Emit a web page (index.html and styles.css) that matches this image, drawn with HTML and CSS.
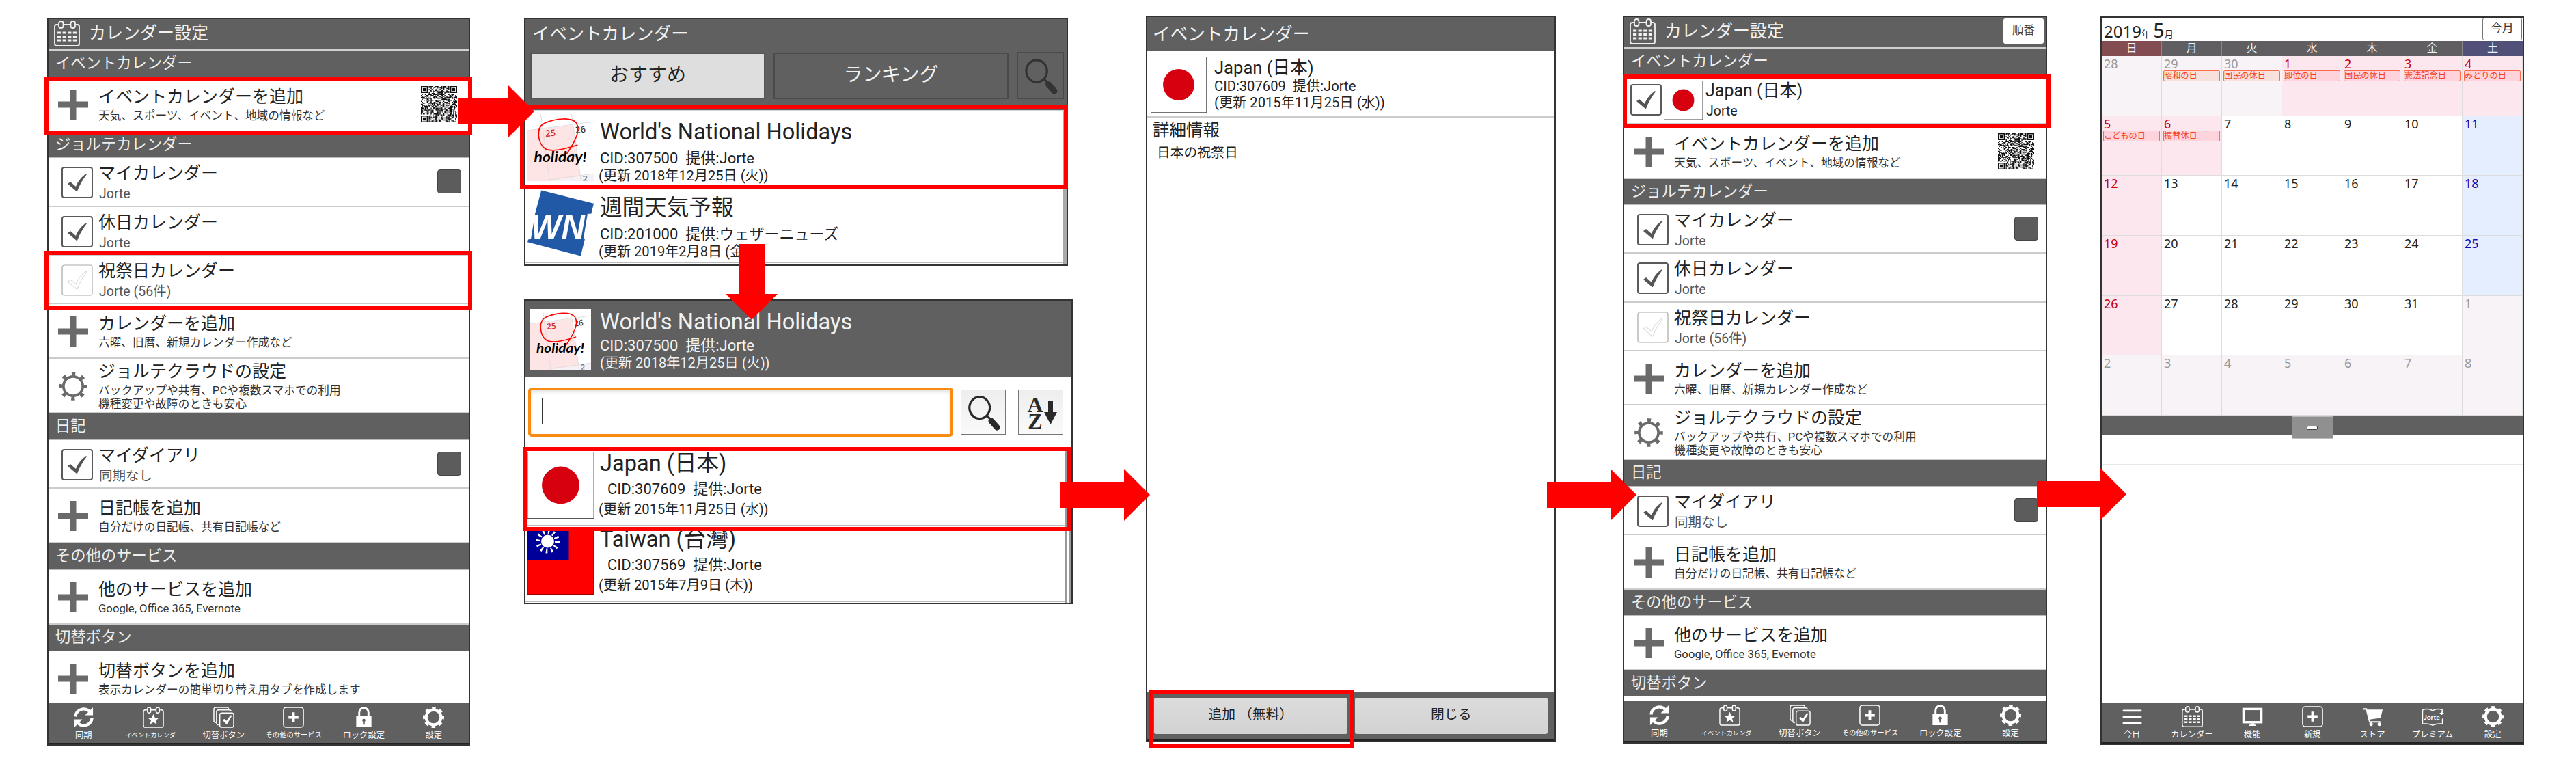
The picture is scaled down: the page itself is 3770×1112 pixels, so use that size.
FILE: index.html
```html
<!DOCTYPE html>
<html lang="ja">
<head>
  <meta charset="UTF-8" />
  <meta name="viewport" content="width=device-width, initial-scale=1.0" />
  <title>イベントカレンダーの追加手順</title>
  <link rel="stylesheet" href="styles.css">
</head>
<body>
  <!-- icons -->
  <svg class="sprite" xmlns="http://www.w3.org/2000/svg">
    <symbol id="i-cal" viewBox="0 0 38 38">
      <g fill="none" stroke="currentColor" stroke-width="1.8">
        <path d="M6 6H4q-3 0-3 3v25q0 3 3 3h30q3 0 3-3V9q0-3-3-3h-2M14 6h10" />
        <rect x="7" y="1" width="6.5" height="10" rx="3" />
        <rect x="24.5" y="1" width="6.5" height="10" rx="3" />
      </g>
      <path d="M5 18h28M5 23.5h28M5 29h28" stroke="currentColor" stroke-width="3" stroke-dasharray="5.2 2.4" />
    </symbol>
    <symbol id="i-plus" viewBox="0 0 44 44">
      <path d="M22 0v44M0 22h44" stroke="currentColor" stroke-width="9" />
    </symbol>
    <symbol id="i-gear" viewBox="0 0 40 40">
      <g fill="none" stroke="currentColor">
        <circle cx="20" cy="20" r="13.5" stroke-width="3.6" />
        <circle cx="20" cy="20" r="17.3" stroke-width="5" stroke-dasharray="5 8.588" stroke-dashoffset="2.5" />
      </g>
    </symbol>
    <symbol id="i-gear2" viewBox="0 0 40 40">
      <g fill="none" stroke="currentColor">
        <circle cx="20" cy="20" r="14" stroke-width="5.5" />
        <circle cx="20" cy="20" r="17.5" stroke-width="5" stroke-dasharray="7 6.744" stroke-dashoffset="3.5" />
      </g>
    </symbol>
    <symbol id="i-check" viewBox="0 0 46 46">
      <rect x="1" y="1" width="44" height="44" rx="3" fill="#fff" stroke="#5a5a5a" stroke-width="2" />
      <path d="M9 25l4-3 8 7C24 21 29 15 36 10l1 1C31 19 26 27 23 36h-1z" fill="#555" />
    </symbol>
    <symbol id="i-uncheck" viewBox="0 0 46 46">
      <rect x="1" y="1" width="44" height="44" rx="3" fill="#fff" stroke="#aaa" stroke-width="1.2" />
      <path d="M9 25l4-3 8 7C24 21 29 15 36 10l1 1C31 19 26 27 23 36h-1z" fill="none" stroke="#ddd" stroke-width="1.2" />
    </symbol>
    <symbol id="i-sync" viewBox="0 0 32 32">
      <path d="M3.5 15a12.5 12.5 0 0 1 21-8" fill="none" stroke="currentColor" stroke-width="4.4" />
      <path d="M30 1v12H18z" fill="currentColor" />
      <g transform="rotate(180 16 16)">
        <path d="M3.5 15a12.5 12.5 0 0 1 21-8" fill="none" stroke="currentColor" stroke-width="4.4" />
        <path d="M30 1v12H18z" fill="currentColor" />
      </g>
    </symbol>
    <symbol id="i-star" viewBox="0 0 32 32">
      <g fill="none" stroke="currentColor" stroke-width="1.5">
        <path d="M6 5H4Q1 5 1 8v20q0 3 3 3h24q3 0 3-3V8q0-3-3-3h-2M12 5h8" />
        <rect x="7" y="1" width="5" height="8.5" rx="2.5" />
        <rect x="20" y="1" width="5" height="8.5" rx="2.5" />
      </g>
      <path d="M16 11l2.3 5.6 6 .4-4.7 3.8 1.6 5.9-5.2-3.3-5.2 3.3 1.6-5.9L7.700 17l6-.4z" fill="currentColor" />
    </symbol>
    <symbol id="i-switch" viewBox="0 0 32 32">
      <g fill="none" stroke="currentColor" stroke-width="1.5">
        <path d="M4 24Q1 24 1 21V4q0-3 3-3h16q3 0 3 2" />
        <path d="M8 27.5q-3 0-3-3V8q0-3 3-3h16q3 0 3 2" />
        <rect x="10" y="9.5" width="21" height="21.5" rx="3" />
      </g>
      <path d="M14 20l3-1.5 3 3 6-8.500 2.500.5L20.500 27z" fill="currentColor" />
    </symbol>
    <symbol id="i-new" viewBox="0 0 32 32">
      <rect x="1" y="1" width="30" height="30" rx="4" fill="none" stroke="currentColor" stroke-width="1.6" />
      <path d="M16 8.5v15M8.500 16h15" stroke="currentColor" stroke-width="4" />
    </symbol>
    <symbol id="i-lock" viewBox="0 0 32 32">
      <path d="M9 15V9a7 7.5 0 0 1 14 0v6" fill="none" stroke="currentColor" stroke-width="3" />
      <path fill-rule="evenodd" d="M4.5 14h23v17h-23zM16 18a2.500 2.500 0 0 0-1.300 4.600V27h2.600v-4.400A2.500 2.500 0 0 0 16 18z" fill="currentColor" />
    </symbol>
    <symbol id="i-menu" viewBox="0 0 32 32">
      <path d="M3 7h26M3 16.5h26M3 26h26" stroke="currentColor" stroke-width="2.8" stroke-linecap="round" />
    </symbol>
    <symbol id="i-screen" viewBox="0 0 32 32">
      <rect x="2.5" y="4.5" width="27" height="20" fill="none" stroke="currentColor" stroke-width="3.5" />
      <path d="M13 26h6v2h2.5v2h-11v-2H13z" fill="currentColor" />
    </symbol>
    <symbol id="i-cart" viewBox="0 0 32 32">
      <path d="M1 4.5h5.500l5 19.500h16" fill="none" stroke="currentColor" stroke-width="2.2" />
      <path d="M8 5.5h23l-3 12.500-17 2.500z" fill="currentColor" />
      <circle cx="13.5" cy="27.5" r="2.6" fill="currentColor" />
      <circle cx="26" cy="27.5" r="2.6" fill="currentColor" />
    </symbol>
    <symbol id="i-premium" viewBox="0 0 34 32">
      <path d="M2 6q8-3 15 1 7-4 15-1v4M32 19v8q-8-1-15 2-7-3-15-2V6M28 11h6M31 8.500v5" fill="none" stroke="currentColor" stroke-width="1.5" />
      <text x="4" y="21" class="jorte" textLength="24" lengthAdjust="spacingAndGlyphs">Jorte</text>
    </symbol>
    <symbol id="i-search" viewBox="0 0 60 60">
      <ellipse cx="25" cy="24" rx="14" ry="15" fill="none" stroke="currentColor" stroke-width="3" />
      <path d="M35 35l6 6" stroke="currentColor" stroke-width="3" />
      <path d="M41 42l8 9" stroke="currentColor" stroke-width="8" stroke-linecap="round" />
    </symbol>
    <symbol id="i-japan" viewBox="0 0 100 100">
      <rect x=".5" y=".5" width="99" height="99" fill="#fff" stroke="#555" />
      <circle cx="50" cy="50" r="28" fill="#d7000f" />
    </symbol>
    <symbol id="i-holiday" viewBox="0 0 98 98">
      <rect width="98" height="98" fill="#fff" />
      <path d="M0 24L67 16 78 91 34 98H0z" fill="#fde5e5" />
      <path d="M34 98l44-7 20-3v10z" fill="#f5f0f6" />
      <path d="M0 24L98 11M20 0l13 98M65 0l14 98M33 96l65-9" fill="none" stroke="#ddd" stroke-width="1" />
      <text x="27" y="33" class="num red" transform="rotate(-5 27 33)">25</text>
      <text x="71" y="28" class="num" transform="rotate(-5 71 28)">26</text>
      <text x="81" y="99" class="num pale">2</text>
      <path d="M74 45C58 50 38 56 27 51 15 43 12 19 26 13 42 6 65 4 72 13 80 25 66 46 58 58" fill="none" stroke="#f00" stroke-width="1.7" />
      <text x="10" y="70" class="holiday" textLength="77" lengthAdjust="spacingAndGlyphs">holiday!</text>
    </symbol>
    <symbol id="i-wn" viewBox="0 0 98 96">
      <path d="M21 0L97 19 78 95 1 75z" fill="#2259a6" />
      <path d="M0 34h12L6 70 0 72zM88 34h10v36H82z" fill="#fff" />
      <text x="6" y="70" class="wn" textLength="78" lengthAdjust="spacingAndGlyphs">WN</text>
    </symbol>
    <symbol id="i-taiwan" viewBox="0 0 98 98">
      <rect x=".5" y=".5" width="97" height="97" fill="#f00" stroke="#900" />
      <rect x="0" y="0" width="61" height="47" fill="#009" />
      <circle cx="30" cy="20" r="14" fill="none" stroke="#fff" stroke-width="7" stroke-dasharray="2.4 4.93" />
      <circle cx="30" cy="20" r="9.5" fill="#fff" />
    </symbol>
  </svg>

  <div class="board">

    <!-- step 1: calendar settings -->
    <section class="phone settings step1">
      <header class="bar"><svg class="bar-icon"><use href="#i-cal" /></svg>カレンダー設定</header>
      <div class="list">
        <h2>イベントカレンダー</h2>
        <div class="item">
          <svg class="plus"><use href="#i-plus" /></svg>
          <div class="txt"><b>イベントカレンダーを追加</b><small>天気、スポーツ、イベント、地域の情報など</small></div>
          <svg class="qr" viewBox="0 0 37 37"></svg>
        </div>
        <h2>ジョルテカレンダー</h2>
        <div class="item check">
          <svg class="box"><use href="#i-check" /></svg>
          <div class="txt"><b>マイカレンダー</b><small>Jorte</small></div>
          <span class="color"></span>
        </div>
        <div class="item check">
          <svg class="box"><use href="#i-check" /></svg>
          <div class="txt"><b>休日カレンダー</b><small>Jorte</small></div>
        </div>
        <div class="item check">
          <svg class="box"><use href="#i-uncheck" /></svg>
          <div class="txt"><b>祝祭日カレンダー</b><small>Jorte (56件)</small></div>
        </div>
        <div class="item">
          <svg class="plus"><use href="#i-plus" /></svg>
          <div class="txt"><b>カレンダーを追加</b><small>六曜、旧暦、新規カレンダー作成など</small></div>
        </div>
        <div class="item cloud">
          <svg class="plus"><use href="#i-gear" /></svg>
          <div class="txt"><b>ジョルテクラウドの設定</b><small>バックアップや共有、PCや複数スマホでの利用<br>機種変更や故障のときも安心</small></div>
        </div>
        <h2>日記</h2>
        <div class="item check">
          <svg class="box"><use href="#i-check" /></svg>
          <div class="txt"><b>マイダイアリ</b><small>同期なし</small></div>
          <span class="color"></span>
        </div>
        <div class="item">
          <svg class="plus"><use href="#i-plus" /></svg>
          <div class="txt"><b>日記帳を追加</b><small>自分だけの日記帳、共有日記帳など</small></div>
        </div>
        <h2>その他のサービス</h2>
        <div class="item">
          <svg class="plus"><use href="#i-plus" /></svg>
          <div class="txt"><b>他のサービスを追加</b><small>Google, Office 365, Evernote</small></div>
        </div>
        <h2>切替ボタン</h2>
        <div class="item">
          <svg class="plus"><use href="#i-plus" /></svg>
          <div class="txt"><b>切替ボタンを追加</b><small>表示カレンダーの簡単切り替え用タブを作成します</small></div>
        </div>
      </div>
      <footer class="tabs">
        <div><svg><use href="#i-sync" /></svg>同期</div>
        <div class="s9"><svg><use href="#i-star" /></svg>イベントカレンダー</div>
        <div><svg><use href="#i-switch" /></svg>切替ボタン</div>
        <div class="s10"><svg><use href="#i-new" /></svg>その他のサービス</div>
        <div><svg><use href="#i-lock" /></svg>ロック設定</div>
        <div><svg><use href="#i-gear2" /></svg>設定</div>
      </footer>
    </section>

    <!-- steps 2 and 3: event calendar search -->
    <div class="column">
      <section class="phone store step2">
        <div class="store-head">
          <div class="store-title">イベントカレンダー</div>
          <div class="store-tabs">
            <span class="tab on">おすすめ</span>
            <span class="tab">ランキング</span>
            <span class="find"><svg><use href="#i-search" /></svg></span>
          </div>
        </div>
        <div class="feed">
          <div class="entry">
            <svg class="thumb"><use href="#i-holiday" /></svg>
            <div class="info"><b>World's National Holidays</b><p>CID:307500&nbsp; 提供:Jorte</p><small>(更新 2018年12月25日 (火))</small></div>
          </div>
          <div class="entry">
            <svg class="thumb"><use href="#i-wn" /></svg>
            <div class="info"><b>週間天気予報</b><p>CID:201000&nbsp; 提供:ウェザーニューズ</p><small>(更新 2019年2月8日 (金))</small></div>
          </div>
        </div>
      </section>

      <section class="phone store step3">
        <div class="cal-head">
          <svg class="thumb"><use href="#i-holiday" /></svg>
          <div class="info"><b>World's National Holidays</b><p>CID:307500&nbsp; 提供:Jorte</p><small>(更新 2018年12月25日 (火))</small></div>
        </div>
        <div class="search-row">
          <div class="input"><i></i></div>
          <span class="btn"><svg><use href="#i-search" /></svg></span>
          <span class="btn">
            <svg viewBox="0 0 64 64">
              <text x="24" y="32" class="az">A</text>
              <text x="24" y="56" class="az">Z</text>
              <path d="M43 16h7v16h6L46.500 50 37 32h6z" fill="#2a2a2a" />
            </svg>
          </span>
        </div>
        <div class="feed">
          <div class="entry">
            <svg class="thumb"><use href="#i-japan" /></svg>
            <div class="info"><b>Japan (日本)</b><p>CID:307609&nbsp; 提供:Jorte</p><small>(更新 2015年11月25日 (水))</small></div>
          </div>
          <div class="entry">
            <svg class="thumb"><use href="#i-taiwan" /></svg>
            <div class="info"><b>Taiwan (台灣)</b><p>CID:307569&nbsp; 提供:Jorte</p><small>(更新 2015年7月9日 (木))</small></div>
          </div>
        </div>
      </section>
    </div>

    <!-- step 4: calendar detail -->
    <section class="phone detail">
      <header class="bar">イベントカレンダー</header>
      <div class="detail-head">
        <svg><use href="#i-japan" /></svg>
        <div><b>Japan (日本)</b><p>CID:307609&nbsp; 提供:Jorte</p><p>(更新 2015年11月25日 (水))</p></div>
      </div>
      <div class="detail-body">
        <h3>詳細情報</h3>
        <p>日本の祝祭日</p>
      </div>
      <footer class="actions">
        <span>追加 （無料）</span>
        <span>閉じる</span>
      </footer>
    </section>

    <!-- step 5: settings with the added calendar -->
    <section class="phone settings step5">
      <header class="bar"><svg class="bar-icon"><use href="#i-cal" /></svg>カレンダー設定<span class="order">順番</span></header>
      <div class="list">
        <h2>イベントカレンダー</h2>
        <div class="item check added">
          <svg class="box"><use href="#i-check" /></svg>
          <svg class="flag"><use href="#i-japan" /></svg>
          <div class="txt"><b>Japan (日本)</b><small>Jorte</small></div>
        </div>
        <div class="item">
          <svg class="plus"><use href="#i-plus" /></svg>
          <div class="txt"><b>イベントカレンダーを追加</b><small>天気、スポーツ、イベント、地域の情報など</small></div>
          <svg class="qr" viewBox="0 0 37 37"></svg>
        </div>
        <h2>ジョルテカレンダー</h2>
        <div class="item check">
          <svg class="box"><use href="#i-check" /></svg>
          <div class="txt"><b>マイカレンダー</b><small>Jorte</small></div>
          <span class="color"></span>
        </div>
        <div class="item check">
          <svg class="box"><use href="#i-check" /></svg>
          <div class="txt"><b>休日カレンダー</b><small>Jorte</small></div>
        </div>
        <div class="item check">
          <svg class="box"><use href="#i-uncheck" /></svg>
          <div class="txt"><b>祝祭日カレンダー</b><small>Jorte (56件)</small></div>
        </div>
        <div class="item">
          <svg class="plus"><use href="#i-plus" /></svg>
          <div class="txt"><b>カレンダーを追加</b><small>六曜、旧暦、新規カレンダー作成など</small></div>
        </div>
        <div class="item cloud">
          <svg class="plus"><use href="#i-gear" /></svg>
          <div class="txt"><b>ジョルテクラウドの設定</b><small>バックアップや共有、PCや複数スマホでの利用<br>機種変更や故障のときも安心</small></div>
        </div>
        <h2>日記</h2>
        <div class="item check">
          <svg class="box"><use href="#i-check" /></svg>
          <div class="txt"><b>マイダイアリ</b><small>同期なし</small></div>
          <span class="color"></span>
        </div>
        <div class="item">
          <svg class="plus"><use href="#i-plus" /></svg>
          <div class="txt"><b>日記帳を追加</b><small>自分だけの日記帳、共有日記帳など</small></div>
        </div>
        <h2>その他のサービス</h2>
        <div class="item">
          <svg class="plus"><use href="#i-plus" /></svg>
          <div class="txt"><b>他のサービスを追加</b><small>Google, Office 365, Evernote</small></div>
        </div>
        <h2>切替ボタン</h2>
      </div>
      <footer class="tabs">
        <div><svg><use href="#i-sync" /></svg>同期</div>
        <div class="s9"><svg><use href="#i-star" /></svg>イベントカレンダー</div>
        <div><svg><use href="#i-switch" /></svg>切替ボタン</div>
        <div class="s10"><svg><use href="#i-new" /></svg>その他のサービス</div>
        <div><svg><use href="#i-lock" /></svg>ロック設定</div>
        <div><svg><use href="#i-gear2" /></svg>設定</div>
      </footer>
    </section>

    <!-- step 6: month view -->
    <section class="phone month">
      <header class="month-head">
        <div class="ym">2019<small>年</small><b>5</b><small>月</small></div>
        <span class="today">今月</span>
      </header>
      <div class="week">
        <span>日</span><span>月</span><span>火</span><span>水</span><span>木</span><span>金</span><span>土</span>
      </div>
      <div class="days" id="days"></div>
      <div class="splitter"><span><i></i></span></div>
      <div class="agenda"></div>
      <footer class="tabs">
        <div><svg><use href="#i-menu" /></svg>今日</div>
        <div><svg><use href="#i-cal" /></svg>カレンダー</div>
        <div><svg><use href="#i-screen" /></svg>機能</div>
        <div><svg><use href="#i-new" /></svg>新規</div>
        <div><svg><use href="#i-cart" /></svg>ストア</div>
        <div><svg class="wide"><use href="#i-premium" /></svg>プレミアム</div>
        <div><svg><use href="#i-gear2" /></svg>設定</div>
      </footer>
    </section>

    <!-- highlights and arrows -->
    <div class="mark m1"></div>
    <div class="mark m2"></div>
    <div class="mark m3"></div>
    <div class="mark m4"></div>
    <div class="mark m5"></div>
    <div class="mark m6"></div>
    <div class="arrow a1"></div>
    <div class="arrow down a2"></div>
    <div class="arrow a3"></div>
    <div class="arrow a4"></div>
    <div class="arrow a5"></div>
  </div>

  <script>
    const holidays = {
      1: '昭和の日', 2: '国民の休日', 3: '即位の日', 4: '国民の休日',
      5: '憲法記念日', 6: 'みどりの日', 7: 'こどもの日', 8: '振替休日'
    };
    const days = document.getElementById('days');
    for (let i = 0; i < 42; i++) {
      const date = new Date(2019, 3, 28 + i);
      const cell = document.createElement('div');
      if (date.getMonth() !== 4) cell.className = 'other';
      else if (holidays[i] || i % 7 === 0) cell.className = 'holi';
      else if (i % 7 === 6) cell.className = 'sat';
      cell.textContent = date.getDate();
      if (holidays[i]) {
        const chip = document.createElement('span');
        chip.textContent = holidays[i];
        cell.appendChild(chip);
      }
      days.appendChild(cell);
    }

    // QR code: three finders, the rest filled from a fixed seed
    let seed = 7;
    let path = '';
    function finder(x, y) {
      const edge = Math.max(Math.abs(x - 3), Math.abs(y - 3));
      return edge === 3 || edge < 2;
    }
    for (let y = 0; y < 37; y++) {
      for (let x = 0; x < 37; x++) {
        seed = (seed * 1103515245 + 12345) % 2147483648;
        let on = (seed / 65536 & 1) === 1;
        if (x < 8 && y < 8) on = x < 7 && y < 7 && finder(x, y);
        else if (x > 28 && y < 8) on = x > 29 && y < 7 && finder(x - 30, y);
        else if (x < 8 && y > 28) on = x < 7 && y > 29 && finder(x, y - 30);
        if (on) path += 'M' + x + ' ' + y + 'h1v1h-1z';
      }
    }
    document.querySelectorAll('.qr').forEach(svg => {
      svg.innerHTML = '<path d="' + path + '" fill="#111"/>';
    });
  </script>
</body>
</html>
```
FILE: styles.css
```css
* {
  box-sizing: border-box;
}
body {
  margin: 0;
  background: #fff;
  font-family: Roboto, 'Noto Sans CJK JP', sans-serif;
  color: #222;
}
h2, h3, p {
  margin: 0;
  font-weight: 400;
}
b, small {
  display: block;
  font-weight: 400;
}
svg {
  display: block;
  flex: none;
}
.sprite {
  display: none;
}
.board {
  position: relative;
  display: flex;
  align-items: flex-start;
  width: 3770px;
  height: 1112px;
  overflow: hidden;
  white-space: nowrap;
}
.phone {
  display: flex;
  flex-direction: column;
  flex: none;
  border: 2px solid #333;
  background: #fff;
  overflow: hidden;
}
.step1 {
  margin: 26px 0 0 69px;
  width: 619px;
  height: 1065px;
}
.column {
  margin-left: 79px;
  width: 803px;
  flex: none;
}
.step2 {
  margin-top: 26px;
  width: 796px;
  height: 363px;
}
.step3 {
  margin-top: 49px;
  width: 803px;
  height: 446px;
}
.detail {
  margin: 23px 0 0 107px;
  width: 600px;
  height: 1063px;
}
.step5 {
  margin: 23px 0 0 98px;
  width: 621px;
  height: 1065px;
}
.month {
  margin: 24px 0 0 78px;
  width: 620px;
  height: 1066px;
}

/* settings list */
.bar {
  display: flex;
  align-items: center;
  flex: none;
  height: 46px;
  background: #606060;
  color: #f2f2f2;
  font-size: 25px;
  line-height: 30px;
}
.settings .bar {
  padding: 0 3px 3px 8px;
  border-bottom: 2px solid #d0d0d0;
}
.bar-icon {
  width: 38px;
  height: 38px;
  margin-right: 13px;
}
.order {
  margin-left: auto;
  width: 59px;
  height: 37px;
  border-radius: 3px;
  background: #fff;
  color: #444;
  font-size: 16.5px;
  line-height: 36px;
  text-align: center;
}
.list {
  flex: 1;
  min-height: 0;
  overflow: hidden;
}
.list h2 {
  height: 38.6px;
  padding-left: 10px;
  border-bottom: 1px solid #bbb;
  background: #606060;
  color: #eee;
  font-size: 22.3px;
  line-height: 36px;
}
.item {
  display: flex;
  height: 80.2px;
  padding: 14px 17px 0 14px;
  border-bottom: 2px solid #ccc;
}
.step5 .item {
  height: 79.7px;
}
.plus {
  width: 44px;
  height: 44px;
  margin: 4px 15px 0 0;
  color: #6a6a6a;
}
.cloud .plus {
  height: 42px;
  margin-top: 15px;
}
.item b {
  font-size: 25px;
  line-height: 30px;
}
.item small {
  margin-top: 3px;
  color: #333;
  font-size: 16.7px;
  line-height: 19.5px;
}
.item.cloud {
  padding-top: 4px;
}
.item .qr {
  width: 53px;
  height: 53px;
  margin: -1px 0 0 auto;
}
.item.check, .step5 .item.check {
  height: 71.2px;
  padding: 8px 11px 0 19px;
}
.box {
  width: 46px;
  height: 46px;
  margin: 5px 8px 0 0;
}
.item.check small {
  margin-top: 5px;
  padding-left: 1px;
  color: #555;
  font-size: 19.5px;
  line-height: 20px;
}
.color {
  width: 35px;
  height: 35px;
  margin: 9px 0 0 auto;
  border: 1px solid #444;
  border-radius: 4px;
  background: #5c5c5c;
}
.step5 .item.added {
  height: 72.3px;
  padding-left: 9px;
}
.added .box {
  margin-right: 3px;
}
.flag {
  width: 57px;
  height: 57px;
  margin-right: 4px;
}
.step5 .added small {
  color: #222;
}

/* bottom tab bar */
.tabs {
  display: flex;
  flex: none;
  height: 60px;
  background: #606060;
  border-bottom: 2px solid #222;
  color: #fff;
  font-size: 12.3px;
  line-height: 18px;
}
.tabs div {
  display: flex;
  flex: 1;
  flex-direction: column;
  align-items: center;
  width: 0;
  padding-top: 5px;
}
.tabs svg {
  width: 31px;
  height: 31px;
  margin-bottom: 2px;
  overflow: visible;
}
.tabs .wide {
  width: 34px;
}
.tabs .s9 {
  font-size: 9.2px;
}
.tabs .s10 {
  font-size: 10.3px;
}

/* event calendar store */
.store-head {
  flex: none;
  height: 133px;
  padding: 5px 2px 0 7px;
  background: #606060;
  color: #f2f2f2;
}
.store-title {
  padding-left: 3px;
  font-size: 25.4px;
  line-height: 32px;
}
.store-tabs {
  display: flex;
  align-items: center;
  margin-top: 11px;
}
.tab {
  width: 344px;
  height: 68px;
  margin-right: 12px;
  border: 2px solid #4a4a4a;
  font-size: 28px;
  line-height: 62px;
  text-align: center;
}
.tab.on {
  border-color: #555;
  background: #dedede;
  color: #222;
}
.find {
  width: 69px;
  height: 69px;
  border: 2px solid #4a4a4a;
  color: #333;
}
.find svg {
  width: 65px;
  height: 65px;
}
.feed {
  flex: 1;
  border-top: 2px solid #ccd5d5;
  border-right: 5px solid #aaa;
  overflow: hidden;
}
.entry {
  display: flex;
  height: 111px;
  padding: 4px 2px 0;
  border-bottom: 2px solid #bbb;
}
.thumb {
  width: 99px;
  height: 98px;
}
.info {
  padding: 6px 0 0 8px;
}
.info b {
  font-size: 32.6px;
  line-height: 40px;
}
.info p {
  margin-top: 6px;
  font-size: 22px;
  line-height: 26px;
}
.info small {
  margin-left: -2px;
  font-size: 20.1px;
  line-height: 24px;
}
.num {
  font: 500 13px 'Noto Sans', sans-serif;
  fill: #333;
}
.num.red {
  fill: #c22;
}
.num.pale {
  fill: #777;
}
.holiday {
  font: italic 700 21px Lato, sans-serif;
}
.wn {
  font: italic 700 50px 'Liberation Sans', sans-serif;
  fill: #fff;
}
.jorte {
  font: 700 10px Lato, sans-serif;
  fill: #fff;
}
.cal-head {
  display: flex;
  flex: none;
  height: 112px;
  padding: 12px 6px 0 7px;
  background: #606060;
  color: #f2f2f2;
}
.cal-head .thumb {
  width: 89px;
  height: 89px;
}
.cal-head .info {
  margin-top: -1px;
  padding: 0 0 0 13px;
}
.cal-head .info p {
  margin-top: 2px;
}
.cal-head .info small {
  margin-left: 0;
}
.search-row {
  display: flex;
  align-items: center;
  flex: none;
  height: 107px;
  padding: 0 10px 6px 4px;
}
.input {
  width: 622px;
  height: 72px;
  padding: 11px 16px;
  border: 4px solid #f98a12;
  border-radius: 5px;
  box-shadow: inset 0 3px 5px #e4e4e4;
}
.input i {
  display: block;
  width: 1px;
  height: 39px;
  background: #333;
}
.btn {
  width: 66px;
  height: 66px;
  margin-left: 11px;
  border: 1px solid #777;
  background: linear-gradient(#eee, #fafafa);
  color: #2a2a2a;
}
.btn + .btn {
  margin-left: 18px;
}
.btn svg {
  width: 64px;
  height: 64px;
}
.az {
  font: 700 32px 'Liberation Serif', serif;
  fill: #2a2a2a;
  text-anchor: middle;
}
.step3 .feed {
  margin-top: -2px;
  border-top-color: #bbb;
  border-right: 9px double #999;
}
.step3 .entry {
  padding: 2px 2px 0;
}
.step3 .entry .info {
  margin-top: -3px;
  padding-top: 0;
}
.step3 .entry .info p {
  margin-top: 5px;
  padding-left: 11px;
}
.step3 .entry .info small {
  margin-top: 4px;
}

/* calendar detail */
.detail .bar {
  height: 50px;
  padding-left: 8px;
  font-size: 25.6px;
}
.detail-head {
  display: flex;
  flex: none;
  height: 97px;
  padding: 8px 5px;
  border-bottom: 2px solid #ccc;
}
.detail-head svg {
  width: 82px;
  height: 82px;
  margin-right: 11px;
}
.detail-head b {
  margin-top: 1px;
  font-size: 25.6px;
  line-height: 30px;
}
.detail-head p {
  font-size: 20.2px;
  line-height: 24px;
}
.detail-body {
  flex: 1;
  padding: 4px 8px;
}
.detail-body h3 {
  font-size: 24.5px;
  line-height: 30px;
}
.detail-body p {
  margin: 6px 0 0 6px;
  font-size: 19.8px;
  line-height: 24px;
}
.actions {
  display: flex;
  flex: none;
  gap: 11px;
  height: 71px;
  padding: 8px 10px;
  background: #606060;
  border-bottom: 2px solid #222;
}
.actions span {
  flex: 1;
  height: 53px;
  border-radius: 3px;
  background: linear-gradient(#dcdcdc, #d2d2d2);
  font-size: 19.8px;
  line-height: 50px;
  text-align: center;
}

/* month view */
.month-head {
  display: flex;
  justify-content: space-between;
  flex: none;
  height: 34px;
}
.ym {
  display: flex;
  align-items: baseline;
  padding-left: 3px;
  font-family: 'Noto Sans', 'Noto Sans CJK JP', sans-serif;
  font-size: 24px;
  line-height: 36px;
}
.ym b {
  margin-left: 4px;
  font-size: 28px;
  font-weight: 500;
}
.ym small {
  font-size: 13.5px;
}
.today {
  width: 58px;
  height: 33px;
  margin-right: 1px;
  border: 1px solid #777;
  border-radius: 3px;
  color: #333;
  font-size: 16.7px;
  line-height: 29px;
  text-align: center;
}
.week {
  display: grid;
  grid-template-columns: repeat(7, 1fr);
  flex: none;
  height: 22px;
  background: #605e60;
  color: #f2f2f2;
  font-size: 16px;
  line-height: 21px;
  text-align: center;
}
.week span {
  border-right: 1px solid #888;
}
.week span:first-child {
  background: #824c50;
}
.week span:last-child {
  background: #505078;
  border-right: 0;
}
.days {
  display: grid;
  grid-template-columns: repeat(7, 1fr);
  grid-template-rows: repeat(6, 1fr);
  flex: none;
  height: 526px;
  font-family: 'Noto Sans', sans-serif;
  font-size: 18px;
  line-height: 20px;
}
.days div {
  padding: 1px 2px 0 3px;
  border-right: 1px solid #ddd;
  border-bottom: 1px solid #ddd;
}
.days .other {
  background: #f7f3f7;
  color: #999;
}
.days .holi {
  background: #fde7ee;
  color: #c8000f;
}
.days .sat {
  background: #e5eeff;
  color: #1010b0;
}
.days span {
  display: block;
  height: 16px;
  margin-left: -1px;
  border: 1px solid #ff6a4a;
  border-radius: 2px;
  background: #ffd3dc;
  color: #f4401c;
  font-family: 'Noto Sans CJK JP', sans-serif;
  font-size: 12.2px;
  line-height: 13px;
}
.days .other span {
  background: #f8e0dc;
}
.splitter {
  display: flex;
  justify-content: center;
  flex: none;
  height: 28px;
  background: #606060;
}
.splitter span {
  z-index: 1;
  display: flex;
  align-items: center;
  justify-content: center;
  width: 61px;
  height: 33px;
  margin-top: 1px;
  border: 1px solid #bbb;
  border-radius: 2px;
  background: #909090;
}
.splitter i {
  width: 14px;
  height: 4px;
  border: 1px solid #444;
  border-radius: 2px;
  background: #fff;
  box-sizing: content-box;
}
.agenda {
  height: 45px;
  border-bottom: 2px solid #e8e8e8;
}
.month .tabs {
  margin-top: auto;
}

/* highlight frames */
.mark {
  position: absolute;
  border: 6px solid #f00;
}
.m1 {
  left: 65px;
  top: 112px;
  width: 626px;
  height: 85px;
}
.m2 {
  left: 65px;
  top: 367px;
  width: 626px;
  height: 86px;
}
.m3 {
  left: 761px;
  top: 153px;
  width: 802px;
  height: 123px;
}
.m4 {
  left: 765px;
  top: 654px;
  width: 802px;
  height: 123px;
}
.m5 {
  left: 1681px;
  top: 1010px;
  width: 301px;
  height: 85px;
}
.m6 {
  left: 2375px;
  top: 109px;
  width: 626px;
  height: 79px;
}

/* arrows */
.arrow {
  position: absolute;
  width: 131px;
  height: 76px;
  background: #f00;
  clip-path: polygon(0 25%, calc(100% - 38px) 25%, calc(100% - 38px) 0, 100% 50%, calc(100% - 38px) 100%, calc(100% - 38px) 75%, 0 75%);
}
.arrow.down {
  width: 76px;
  height: 111px;
  clip-path: polygon(25% 0, 75% 0, 75% calc(100% - 38px), 100% calc(100% - 38px), 50% 100%, 0 calc(100% - 38px), 25% calc(100% - 38px));
}
.a1 {
  left: 670px;
  top: 125px;
  width: 112px;
}
.a2 {
  left: 1062px;
  top: 357px;
}
.a3 {
  left: 1552px;
  top: 686px;
}
.a4 {
  left: 2264px;
  top: 686px;
}
.a5 {
  left: 2981px;
  top: 685px;
}
```
